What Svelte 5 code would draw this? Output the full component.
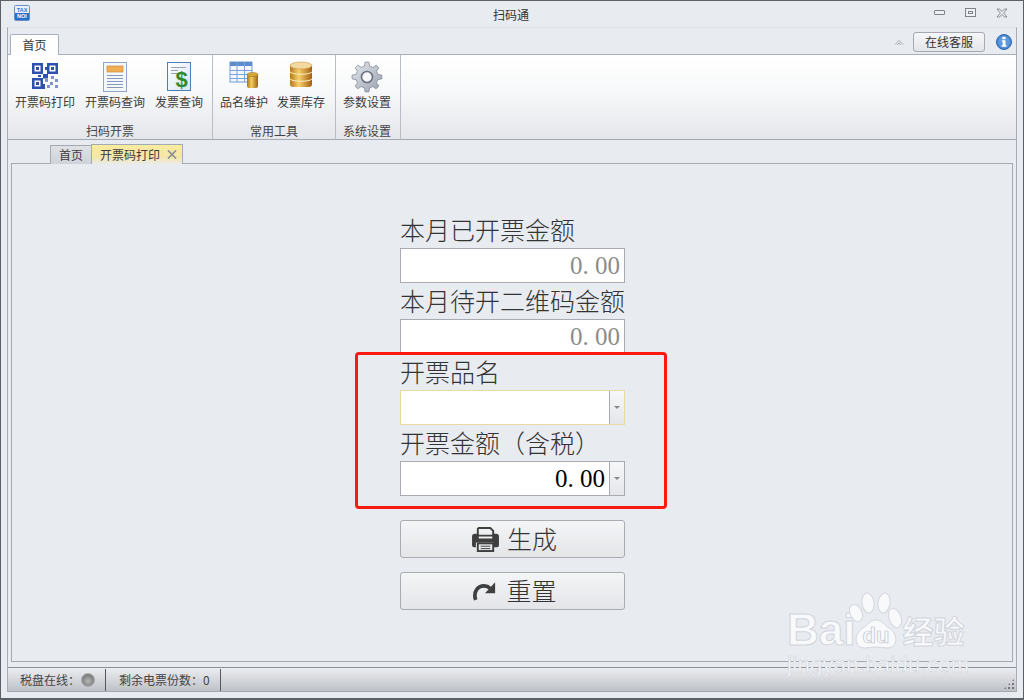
<script>
  const fields = [
    { label: '本月已开票金额', kind: 'readonly' },
    { label: '本月待开二维码金额', kind: 'readonly' }
  ];
  const dgrid = [0,1,2,3];
  function gearPath(cx, cy, ro, ri, n) {
    const pts = [];
    const step = (Math.PI * 2) / n;
    for (let i = 0; i < n; i++) {
      const a = i * step - Math.PI / 2;
      const w = step * 0.2;
      const p = (r, t) => (cx + r * Math.cos(t)).toFixed(2) + ' ' + (cy + r * Math.sin(t)).toFixed(2);
      pts.push(p(ri, a - w * 1.5), p(ro, a - w * 0.8), p(ro, a + w * 0.8), p(ri, a + w * 1.5));
    }
    return 'M' + pts.join('L') + 'Z';
  }
  const gear = gearPath(16, 16, 15, 11.2, 8);
</script>

<div class="window">
  <header class="titlebar">
    <svg class="applogo" width="16" height="16" viewBox="0 0 16 16">
      <rect x="0.5" y="0.5" width="15" height="15" rx="1" fill="#e8f0fa" stroke="#6a8fc0"/>
      <rect x="1" y="8" width="14" height="7" fill="#1c74cf"/>
      <text x="8" y="6.6" class="lg a">TAX</text>
      <text x="8" y="13.4" class="lg b">NOI</text>
    </svg>
    <div class="title">扫码通</div>
    <div class="winbtns">
      <svg width="12" height="8" viewBox="0 0 12 8"><rect x="0.5" y="1.5" width="10" height="4" rx="0.5" fill="#eef0f3" stroke="#7d828b"/></svg>
      <svg width="12" height="10" viewBox="0 0 12 10"><rect x="0.5" y="0.5" width="10" height="8" fill="#eef0f3" stroke="#7d828b"/><rect x="3.5" y="3.5" width="4" height="2" fill="none" stroke="#7d828b"/></svg>
      <svg width="12" height="10" viewBox="0 0 12 10"><path d="M1 1h2.5L6 3.6 8.500 1H11L7.600 5 11 9H8.500L6 6.400 3.500 9H1l3.400-4z" fill="#eef0f3" stroke="#7d828b" stroke-width="0.9"/></svg>
    </div>
  </header>

  <div class="shell">
    <div class="tabrow">
      <div class="rtab">首页</div>
      <div class="rright">
        <svg width="10" height="8" viewBox="0 0 10 8" fill="none" stroke="#a4a8af"><path d="M1 6.500 5 2.500l4 4M3 7l2-2 2 2"/></svg>
        <button class="kefu">在线客服</button>
        <svg width="16" height="16" viewBox="0 0 16 16"><circle cx="8" cy="8" r="7.500" fill="#4a86cf" stroke="#2f69b3"/><circle cx="8" cy="8" r="5.800" fill="#5f9ae0"/><rect x="6.300" y="2.800" width="3.200" height="2.400" fill="#fff"/><path d="M5.800 6.300h3.700v5h1v1.400H5.600v-1.400h1.100V7.700h-.9z" fill="#fff"/></svg>
      </div>
    </div>

    <section class="ribbon">
      <div class="group g1">
        <div class="items">
          <div class="item">
            <svg class="qr" width="26" height="26" viewBox="0 0 26 26">
              <g fill="#3050b0">
                <path d="M0 0h11v11H0zm2.500 2.500v6h6v-6z" fill-rule="evenodd"/><rect x="4" y="4" width="3" height="3"/>
                <path d="M15 0h11v11H15zm2.500 2.500v6h6v-6z" fill-rule="evenodd"/><rect x="19" y="4" width="3" height="3"/>
                <path d="M0 15h11v11H0zm2.500 2.500v6h6v-6z" fill-rule="evenodd"/><rect x="4" y="19" width="3" height="3"/>
                <rect x="11" y="11" width="5" height="4.500"/>
                <rect x="6" y="12" width="3" height="2"/>
                <rect x="13" y="4" width="2" height="3"/>
                <rect x="11" y="21" width="2" height="5"/>
              </g>
              <g fill="#8093cf">
                <rect x="13" y="16" width="3" height="3"/><rect x="19" y="13" width="3" height="3"/><rect x="23" y="16" width="3" height="3"/><rect x="18" y="19" width="3" height="3"/><rect x="23" y="22" width="3" height="3"/><rect x="15" y="22" width="3" height="3"/>
              </g>
            </svg>
            <span>开票码打印</span>
          </div>
          <div class="item">
            <svg width="28" height="32" viewBox="0 0 28 32">
              <rect x="2.500" y="1.500" width="23" height="29" fill="#f4f7fc" stroke="#8ea6c9"/>
              <rect x="6" y="5" width="16" height="6" fill="#eeae52" stroke="#c98d3a" stroke-width="0.700"/>
              <path d="M6 14.500h16M6 17.500h16M6 20.500h16M6 23.500h16M6 26.500h16" stroke="#8597bd"/>
            </svg>
            <span>开票码查询</span>
          </div>
          <div class="item">
            <svg width="26" height="32" viewBox="0 0 26 32">
              <defs><linearGradient id="doc" x1="0" y1="0" x2="1" y2="1"><stop offset="0" stop-color="#ffffff"/><stop offset="1" stop-color="#d4e5f5"/></linearGradient></defs>
              <rect x="1.500" y="1.500" width="23" height="28" fill="url(#doc)" stroke="#4b7fb5"/>
              <path d="M5 6.500h15M5 9.500h7M5 12.500h7" stroke="#9aa3ad"/>
              <text x="15.500" y="26" class="dollar">$</text>
            </svg>
            <span>发票查询</span>
          </div>
        </div>
        <div class="glabel">扫码开票</div>
      </div>

      <div class="group g2">
        <div class="items">
          <div class="item">
            <svg width="30" height="28" viewBox="0 0 30 28">
              <defs><linearGradient id="cyl" x1="0" x2="1" y1="0" y2="0"><stop offset="0" stop-color="#a87614"/><stop offset=".4" stop-color="#f4cc5e"/><stop offset="1" stop-color="#96660f"/></linearGradient></defs>
              <rect x="1" y="1" width="22" height="20" fill="#f4f8fd" stroke="#6e9cd6"/>
              <rect x="1" y="1" width="22" height="4" fill="#5d8ccb"/>
              <path d="M1 9.500h22M1 13.500h22M1 17.500h22M8 1v20M15.500 1v20" stroke="#7ba4da"/>
              <rect x="18" y="13" width="11" height="14" rx="2" fill="url(#cyl)"/>
              <ellipse cx="23.500" cy="13.500" rx="5.500" ry="2" fill="#d9a73a" stroke="#8f6512" stroke-width="0.500"/>
            </svg>
            <span>品名维护</span>
          </div>
          <div class="item">
            <svg width="24" height="28" viewBox="0 0 24 28">
              <defs><linearGradient id="cyl2" x1="0" x2="1" y1="0" y2="0"><stop offset="0" stop-color="#b8761a"/><stop offset=".4" stop-color="#f8cf6c"/><stop offset="1" stop-color="#a35f10"/></linearGradient></defs>
              <rect x="1" y="3" width="22" height="23" rx="3" fill="url(#cyl2)"/>
              <ellipse cx="12" cy="4.500" rx="11" ry="3.500" fill="#f3d9a0" stroke="#c08a30" stroke-width="0.500"/>
              <path d="M1 11c3 3 19 3 22 0M1 18c3 3 19 3 22 0" fill="none" stroke="#fff0c8"/>
            </svg>
            <span>发票库存</span>
          </div>
        </div>
        <div class="glabel">常用工具</div>
      </div>

      <div class="group g3">
        <div class="items">
          <div class="item">
            <svg width="32" height="32" viewBox="0 0 32 32">
              <defs><linearGradient id="gear" x1="0" y1="0" x2="1" y2="1"><stop offset="0" stop-color="#e6e9ee"/><stop offset="1" stop-color="#99a0ae"/></linearGradient></defs>
              <path d={gear} fill="url(#gear)" stroke="#858c9b" stroke-width="0.800"/>
              <circle cx="16" cy="16" r="5.500" fill="#f7f8fa" stroke="#6a7282" stroke-width="1.600"/>
            </svg>
            <span>参数设置</span>
          </div>
        </div>
        <div class="glabel">系统设置</div>
      </div>
    </section>

    <div class="doctabs">
      <div class="dtab">首页</div>
      <div class="dtab active">开票码打印
        <svg class="x" width="10" height="9" viewBox="0 0 10 9"><path d="M1 .5l8 8M9 .5l-8 8" stroke="#8b8e94" stroke-width="1.700"/></svg>
      </div>
    </div>

    <main class="content">
      <div class="form">
        {#each fields as f}
          <div class="flabel">{f.label}</div>
          <div class="input ro"><span>0<em>.</em>00</span></div>
        {/each}
        <div class="hl">
          <div class="flabel">开票品名</div>
          <div class="input focus"><span></span><i class="spin"><b></b></i></div>
          <div class="flabel">开票金额（含税）</div>
          <div class="input"><span>0<em>.</em>00</span><i class="spin"><b></b></i></div>
        </div>
        <button class="act first">
          <svg width="29" height="25" viewBox="0 0 30 26">
            <path d="M8 1h12l3 3v5H7V2z" fill="none" stroke="#3f3f3f" stroke-width="2"/>
            <path d="M4 7h4v5h14V7h4a3 3 0 0 1 3 3v9a2 2 0 0 1-2 2h-4v-5H5v5H3a2 2 0 0 1-2-2v-9a3 3 0 0 1 3-3z" fill="#3f3f3f"/>
            <rect x="7" y="17" width="16" height="8" fill="none" stroke="#3f3f3f" stroke-width="2"/>
            <path d="M10 20h10M10 22.500h10" stroke="#3f3f3f"/>
          </svg>
          <span>生成</span>
        </button>
        <button class="act second">
          <svg width="25" height="21" viewBox="0 0 27 22">
            <path d="M4 20C1 12 6 5 13 5c3 0 5 1 6.500 2.500" fill="none" stroke="#3f3f3f" stroke-width="4"/>
            <path d="M25 1v12H14z" fill="#3f3f3f"/>
          </svg>
          <span>重置</span>
        </button>
      </div>
    </main>

    <footer class="status">
      <div class="cell c1">税盘在线：<i class="led"></i></div>
      <div class="cell c2">剩余电票份数：0</div>
      <div class="grip">
        {#each dgrid as d}<u class="d{d}"></u>{/each}
      </div>
    </footer>
  </div>

  <div class="mark">
    <div class="bai">
      <span class="latin">Bai</span>
      <svg width="62" height="62" viewBox="0 0 62 62">
        <g fill="#f8f9fb" stroke="#d2d5dc">
          <ellipse cx="11" cy="23" rx="6" ry="9" transform="rotate(-25 11 23)"/>
          <ellipse cx="23" cy="13" rx="6" ry="10" transform="rotate(-8 23 13)"/>
          <ellipse cx="39" cy="13" rx="6" ry="10" transform="rotate(8 39 13)"/>
          <ellipse cx="50" cy="28" rx="6" ry="10" transform="rotate(-20 50 28)"/>
          <path d="M31 30c6 0 8 5 13 8 9 5 10 20-2 20-4 0-7-1-11-1s-7 1-11 1C8 58 9 43 18 38c5-3 7-8 13-8z"/>
        </g>
        <text x="31" y="53" class="du">du</text>
      </svg>
      <span class="jy">经验</span>
    </div>
    <div class="url">jingyan.baidu.com</div>
  </div>
</div>

<style>
  :global(body) { margin: 0; background: #e8ebf0; }
  * { box-sizing: border-box; }
  .window {
    width: 1024px; height: 700px; position: relative; overflow: hidden;
    display: flex; flex-direction: column;
    background: #e8ebf0;
    border: 1px solid #5c6068; border-bottom-width: 2px;
    font-family: "Noto Sans CJK SC", "Noto Sans", sans-serif;
    color: #3c3c3c; font-size: 12px;
    text-spacing-trim: space-all;
  }
  .titlebar { height: 26px; flex: none; display: flex; align-items: center; padding: 0 0 0 13px; position: relative; }
  .applogo { margin-top: -2px; }
  .lg { font: bold 5.500px "Liberation Sans", sans-serif; text-anchor: middle; }
  .lg.a { fill: #2f7ad2; }
  .lg.b { fill: #fff; }
  .title { position: absolute; left: 0; right: 2px; top: 5px; text-align: center; line-height: 18px; color: #333; }
  .winbtns { margin-left: auto; display: flex; align-items: center; gap: 19px; padding-right: 15px; margin-top: -2px; }
  .shell { flex: 1; margin: 0 6px 6px 6px; display: flex; flex-direction: column; min-height: 0; border: 1px solid #dfe1e6; border-bottom: none; border-top-color: #dcdfe3; border-left-color: #a7acb6; border-right-color: #a7acb6; }
  .tabrow { height: 27px; flex: none; display: flex; align-items: flex-end; padding-left: 2px; margin-bottom: -1px; position: relative; z-index: 1; }
  .rtab { width: 49px; height: 21px; background: linear-gradient(#fff, #fdfdfe); border: 1px solid #a9b0bd; border-bottom: none; border-radius: 2px 2px 0 0; text-align: center; line-height: 19px; color: #333; }
  .rright { margin-left: auto; display: flex; align-items: center; align-self: flex-start; padding-top: 3px; height: 24px; }
  .kefu { width: 72px; height: 20px; margin: 0 11px 0 9px; padding: 0; border: 1px solid #a4a9b2; border-radius: 3px; background: linear-gradient(#f6f7f9, #e3e5e9); font: inherit; color: #333; line-height: 17px; }
  .rright svg:last-child { margin-right: 4px; }
  .ribbon { height: 86px; flex: none; display: flex; background: linear-gradient(#ffffff 0%, #f8f9fa 40%, #e4e6ea 100%); border-top: 1px solid #a9b0bd; border-bottom: 1px solid #a4a9b3; }
  .group { display: flex; flex-direction: column; border-right: 1px solid #b8bcc5; position: relative; }
  .g1 { width: 205px; padding-left: 7px; }
  .g2 { width: 123px; padding-left: 7px; }
  .g3 { width: 65px; padding-left: 7px; }
  .items { display: flex; gap: 9px; height: 67px; flex: none; }
  .g1 .items { gap: 10px; }
  .item { display: flex; flex-direction: column; align-items: center; white-space: nowrap; height: 56px; justify-content: flex-end; position: relative; line-height: 18px; color: #3c3c3c; }
  .item svg { position: absolute; top: 6px; }
  .item svg.qr { top: 8px; }
  .glabel { text-align: center; line-height: 18px; color: #444; margin-left: -7px; }
  .g3 .glabel { margin-left: -9px; }
  .dollar { font: bold 22px "Liberation Sans", sans-serif; fill: #2f8a2d; text-anchor: middle; }
  .doctabs { height: 24px; flex: none; display: flex; align-items: flex-end; padding-left: 42px; margin-bottom: -1px; position: relative; z-index: 1; }
  .dtab { width: 42px; height: 19px; background: linear-gradient(#dfe1e5, #cfd2d8); border: 1px solid #a4a9b3; border-bottom: none; text-align: center; line-height: 18px; color: #3c3c3c; }
  .dtab.active { width: 92px; height: 20px; margin-left: -1px; background: linear-gradient(#f8ec9f, #f4e6a8 60%, #ebebe6); text-align: left; padding-left: 8px; line-height: 19px; display: flex; align-items: center; }
  .x { margin-left: 7px; }
  .content { flex: 1; min-height: 0; margin: 0 3px; border: 1px solid #a4a9b3; display: flex; justify-content: center; padding: 48px 0 0 1px; background: #e8ebf0; }
  .form { width: 225px; display: flex; flex-direction: column; }
  .flabel { height: 36px; font-size: 25px; line-height: 34px; font-weight: 300; white-space: nowrap; color: #333; }
  .input { height: 35px; flex: none; display: flex; background: #fff; border: 1px solid #a8abb1; }
  .input span { flex: 1; text-align: right; font: 25px/33px "Liberation Serif", serif; padding-right: 4px; color: #000; }
  .input em { display: inline-block; width: 12.500px; font-style: normal; text-align: left; }
  .input.ro span { color: #8c8c8c; }
  .input.focus { border-color: #ead9a0; }
  .spin { width: 15px; border-left: 1px solid #a8abb1; background: linear-gradient(#f6f7f8, #e4e6ea); display: flex; align-items: center; justify-content: center; }
  .spin b { width: 0; height: 0; border: 3px solid transparent; border-top-color: #85888e; border-bottom: 0; }
  .hl { position: relative; }
  .hl::after { content: ""; box-sizing: border-box; position: absolute; left: -45px; top: -2px; width: 312px; height: 157px; border: 3px solid #fb1a10; border-radius: 4px; pointer-events: none; }
  .act { height: 38px; flex: none; margin-top: 14px; display: flex; align-items: center; justify-content: center; gap: 7px; padding: 0; border: 1px solid #a8abb1; border-radius: 3px; background: linear-gradient(#f4f5f7, #e3e5e8); font: inherit; font-size: 25px; font-weight: 300; color: #333; }
  .act span { line-height: 34px; margin-top: -2px; }
  .act.first { margin-top: 24px; padding-left: 3px; }
  .act.second { padding-left: 4px; gap: 9px; }
  .status { height: 25px; flex: none; margin: 5px 0 0; display: flex; align-items: center; background: linear-gradient(#eceef1, #bec1c7); border-top: 1px solid #8a8f98; border-bottom: 1px solid #a4a9b3; position: relative; font-size: 12px; color: #444; }
  .cell { height: 22px; display: flex; align-items: center; border-right: 1px solid #55585e; white-space: nowrap; }
  .c1 { width: 98px; padding-left: 12px; }
  .c2 { width: 115px; padding-left: 13px; }
  .led { width: 14px; height: 14px; border-radius: 50%; margin-left: 1px; flex: none; background: radial-gradient(circle at 50% 60%, #b7b7b7, #7b7b7b 70%, #8f8f8f); border: 1px solid #a9aaad; }
  .grip { position: absolute; right: 2px; bottom: 2px; width: 10px; height: 10px; background: radial-gradient(circle at 1px 1px, #777 1px, transparent 1.200px) 0 0 / 4px 4px; clip-path: polygon(100% 0, 100% 100%, 0 100%); }
  .grip u { display: none; }
  .mark { position: absolute; left: 786px; top: 589px; width: 190px; color: #f8f9fb; pointer-events: none; }
  .bai { display: flex; align-items: flex-end; height: 62px; }
  .latin { font: bold 44px/44px "Liberation Sans", sans-serif; color: #f8f9fb; -webkit-text-stroke: 1px #d2d5dc; }
  .bai svg { margin: 0 0 0 -10px; flex: none; }
  .du { font: bold 22px "Liberation Sans", sans-serif; text-anchor: middle; fill: #f8f9fb; stroke: #bfc4cc; stroke-width: .7; }
  .jy { font-size: 31px; font-weight: 700; line-height: 44px; white-space: nowrap; -webkit-text-stroke: 1px #d2d5dc; color: #f8f9fb; margin-left: -5px; }
  .url { font: 22px/26px "Liberation Sans", sans-serif; color: #f8f9fb; letter-spacing: .3px; white-space: nowrap; margin-top: 0; -webkit-text-stroke: .5px #cbcfd6; }
</style>
